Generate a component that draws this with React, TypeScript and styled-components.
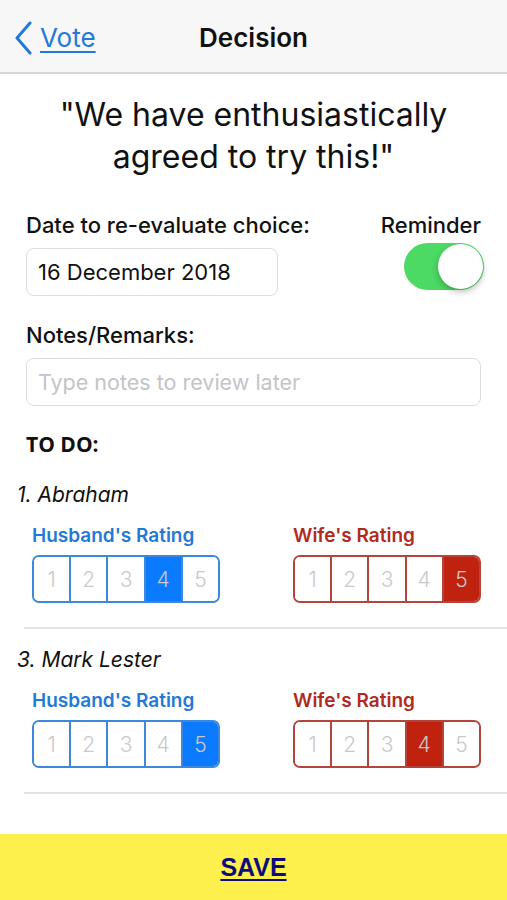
import styled, { createGlobalStyle } from "styled-components";

const GlobalStyle = createGlobalStyle`
  html, body {
    margin: 0;
    padding: 0;
    background: #ffffff;
  }
  body {
    font-family: Inter, "Noto Sans", sans-serif;
    color: #111111;
  }
`;

const colors = {
  blue: "#2479d8",
  blueFill: "#0a7bff",
  blueBorder: "#3b88dd",
  red: "#b12a1d",
  redFill: "#bf230f",
  redBorder: "#b5443a",
  muted: "#c9c9c9",
  line: "#dddddd",
};

const Page = styled.div`
  width: 507px;
  min-height: 900px;
  display: flex;
  flex-direction: column;
`;

const NavBar = styled.header`
  height: 74px;
  box-sizing: border-box;
  padding: 3px 14px 0;
  background: #f7f7f7;
  border-bottom: 2px solid #d6d6d6;
  display: grid;
  grid-template-columns: 1fr auto 1fr;
  align-items: center;
`;

const BackLink = styled.a`
  display: flex;
  align-items: center;
  gap: 6px;
  color: ${colors.blue};
  font-size: 26px;
  text-decoration: underline;
  text-underline-offset: 4px;
  text-decoration-thickness: 2px;
`;

const Title = styled.h1`
  margin: 0;
  font-size: 26px;
  font-weight: 600;
`;

const Quote = styled.p`
  margin: 20px 0 0;
  text-align: center;
  font-size: 32px;
  line-height: 42px;
  padding: 0 28px;
`;

const Content = styled.main`
  padding: 0 26px;
`;

const TopRow = styled.div`
  display: flex;
  justify-content: space-between;
  margin-top: 34px;
`;

const Column = styled.div<{ $align?: string }>`
  display: flex;
  flex-direction: column;
  align-items: ${({ $align }) => $align || "flex-start"};
`;

const Label = styled.div<{ $gap?: number }>`
  font-size: 22px;
  font-weight: 500;
  line-height: 26px;
  margin-bottom: ${({ $gap }) => $gap ?? 10}px;
`;

const Field = styled.div<{ $width?: string; $placeholder?: boolean }>`
  box-sizing: border-box;
  width: ${({ $width }) => $width || "100%"};
  height: 48px;
  border: 1px solid ${colors.line};
  border-radius: 8px;
  display: flex;
  align-items: center;
  padding: 0 11px;
  font-size: ${({ $placeholder }) => ($placeholder ? 21.5 : 22)}px;
  color: ${({ $placeholder }) => ($placeholder ? "#c4c4c8" : "#111")};
`;

const Switch = styled.div`
  width: 80px;
  height: 47px;
  border-radius: 24px;
  background: #4cd964;
  display: flex;
  justify-content: flex-end;
  align-items: center;
  padding: 0 1px;
  box-sizing: border-box;
  margin-top: 5px;
  margin-right: -3px;
`;

const Thumb = styled.div`
  width: 45px;
  height: 45px;
  border-radius: 50%;
  background: #fff;
  box-shadow: 0 3px 6px rgba(0, 0, 0, 0.25);
`;

const Section = styled.div`
  margin-top: 26px;
`;

const TodoHeading = styled.div`
  margin-top: 25px;
  margin-bottom: 7px;
  font-size: 21px;
  font-weight: 700;
  font-family: "Open Sans", Inter, sans-serif;
  line-height: 26px;
`;

const Item = styled.div`
  margin-left: -2px;
  margin-right: -26px;
  padding-top: 18px;
  padding-bottom: 24px;
  border-bottom: 2px solid #e2e2e2;
`;

const ItemName = styled.div`
  margin-left: -7px;
  font-size: 21px;
  font-style: italic;
  line-height: 26px;
`;

const Ratings = styled.div`
  display: flex;
  justify-content: space-between;
  padding: 0 26px 0 8px;
  margin-top: 17px;
`;

const RatingGroup = styled.div`
  display: flex;
  flex-direction: column;
  gap: 8px;
`;

const RatingLabel = styled.div<{ $color: string }>`
  color: ${({ $color }) => $color};
  font-size: 19px;
  font-weight: 600;
  line-height: 22px;
`;

const Segments = styled.div<{ $color: string }>`
  display: flex;
  width: 188px;
  height: 48px;
  box-sizing: border-box;
  border: 2px solid ${({ $color }) => $color};
  border-radius: 7px;
  overflow: hidden;
`;

const Segment = styled.div<{ $color: string; $fill: string; $active: boolean }>`
  flex: 1;
  display: flex;
  align-items: center;
  justify-content: center;
  font-size: 21px;
  font-weight: 300;
  color: ${colors.muted};
  background: ${({ $active, $fill }) => ($active ? $fill : "#fff")};
  &:not(:first-child) {
    border-left: 2px solid ${({ $color }) => $color};
  }
`;

const Footer = styled.footer`
  margin-top: auto;
  height: 66px;
  background: #fdef4c;
  display: flex;
  align-items: center;
  justify-content: center;
`;

const SaveButton = styled.a`
  font-family: "Liberation Sans", Arial, sans-serif;
  font-weight: 700;
  font-size: 25px;
  color: #0c0c7c;
  text-decoration: underline;
  text-underline-offset: 3px;
`;

function Rating({
  label,
  value,
  color,
  border,
  fill,
}: {
  label: string;
  value: number;
  color: string;
  border: string;
  fill: string;
}) {
  return (
    <RatingGroup>
      <RatingLabel $color={color}>{label}</RatingLabel>
      <Segments $color={border}>
        {[1, 2, 3, 4, 5].map((n) => (
          <Segment key={n} $color={border} $fill={fill} $active={n === value}>
            {n}
          </Segment>
        ))}
      </Segments>
    </RatingGroup>
  );
}

const items = [
  { name: "1. Abraham", husband: 4, wife: 5 },
  { name: "3. Mark Lester", husband: 5, wife: 4 },
];

export default function App() {
  return (
    <Page>
      <GlobalStyle />
      <NavBar>
        <BackLink>
          <svg width="20" height="34" viewBox="0 0 20 34">
            <path
              d="M16 2 L3 17 L16 32"
              fill="none"
              stroke={colors.blue}
              strokeWidth="3"
              strokeLinecap="round"
              strokeLinejoin="round"
            />
          </svg>
          Vote
        </BackLink>
        <Title>Decision</Title>
        <div />
      </NavBar>
      <Quote>"We have enthusiastically agreed to try this!"</Quote>
      <Content>
        <TopRow>
          <Column>
            <Label>Date to re-evaluate choice:</Label>
            <Field $width="252px">16 December 2018</Field>
          </Column>
          <Column $align="flex-end">
            <Label $gap={0}>Reminder</Label>
            <Switch>
              <Thumb />
            </Switch>
          </Column>
        </TopRow>
        <Section>
          <Label>Notes/Remarks:</Label>
          <Field $placeholder>Type notes to review later</Field>
        </Section>
        <TodoHeading>TO DO:</TodoHeading>
        {items.map((item) => (
          <Item key={item.name}>
            <ItemName>{item.name}</ItemName>
            <Ratings>
              <Rating
                label="Husband's Rating"
                value={item.husband}
                color={colors.blue}
                border={colors.blueBorder}
                fill={colors.blueFill}
              />
              <Rating
                label="Wife's Rating"
                value={item.wife}
                color={colors.red}
                border={colors.redBorder}
                fill={colors.redFill}
              />
            </Ratings>
          </Item>
        ))}
      </Content>
      <Footer>
        <SaveButton>SAVE</SaveButton>
      </Footer>
    </Page>
  );
}
